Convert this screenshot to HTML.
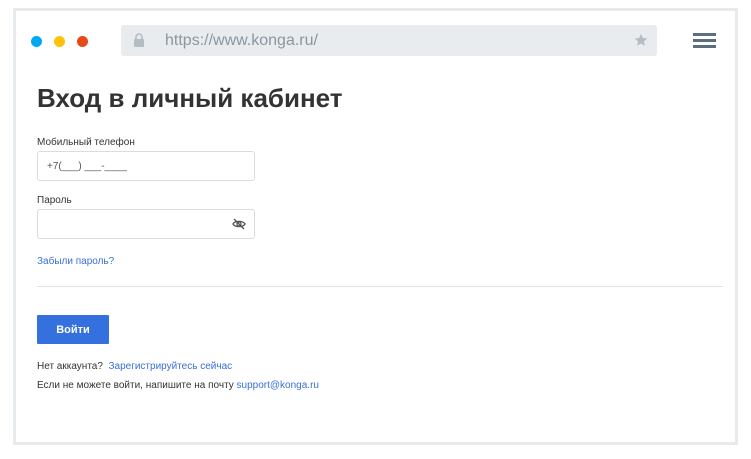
<!DOCTYPE html><html><head><meta charset="utf-8"><style>
body{margin:0;width:751px;height:459px;background:#fff;font-family:"Liberation Sans","DejaVu Sans",sans-serif;position:relative;overflow:hidden}
.frame{position:absolute;left:13px;top:8px;width:719px;height:431px;border:3px solid #e8ebee;background:#fff}
.a{position:absolute}
.dot{position:absolute;top:36px;width:11px;height:11px;border-radius:50%}
.url{left:121px;top:25px;width:536px;height:31px;background:#e9ecef;border-radius:3px}
.inp{position:absolute;left:37px;width:216px;height:28px;border:1px solid #d9dce0;border-radius:3px;background:#fff}
.lbl{font-size:10px;color:#333}
.lnk{color:#3a6fd8}
</style></head><body>
<div class="frame"></div>
<div class="dot" style="left:31px;background:#00a8f3"></div>
<div class="dot" style="left:54px;background:#ffc20a"></div>
<div class="dot" style="left:77px;background:#e64a19"></div>
<div class="a url"></div>
<svg class="a" style="left:133px;top:33px" width="12" height="14" viewBox="0 0 12 14"><path d="M3 6V4a3 3 0 0 1 6 0v2" stroke="#b4bcc4" stroke-width="1.6" fill="none"/><rect x="1" y="6" width="10" height="8" rx="1" fill="#b4bcc4"/></svg>
<div class="a" style="left:165px;top:32px;font-size:16px;color:#8a96a0">https://www.konga.ru/</div>
<svg class="a" style="left:634px;top:33px" width="14" height="14" viewBox="0 0 24 24"><path d="M12 1.5l3.2 7 7.6.8-5.7 5.1 1.6 7.5L12 18l-6.7 3.9 1.6-7.5L1.2 9.3l7.6-.8z" fill="#b4bcc4"/></svg>
<div class="a" style="left:693px;top:33px;width:23px;height:3px;background:#5b6f7f;box-shadow:0 6px 0 #5b6f7f,0 12px 0 #5b6f7f"></div>
<div class="a" style="left:37px;top:83px;font-size:26px;font-weight:bold;color:#333">Вход в личный кабинет</div>
<div class="a lbl" style="left:37px;top:137px">Мобильный телефон</div>
<div class="inp" style="top:151px"></div>
<div class="a" style="left:47px;top:161px;font-size:10px;color:#555">+7(___) ___-____</div>
<div class="a lbl" style="left:37px;top:195px">Пароль</div>
<div class="inp" style="top:209px"></div>
<svg class="a" style="left:232px;top:218px" width="14" height="12" viewBox="0 0 14 12"><path d="M1 6C3 2.5 11 2.5 13 6C11 9.5 3 9.5 1 6Z" stroke="#555" stroke-width="1.3" fill="none"/><circle cx="7" cy="6" r="2" stroke="#555" stroke-width="1.3" fill="none"/><path d="M2 1L12 11" stroke="#555" stroke-width="1.3"/></svg>
<div class="a lnk" style="left:37px;top:256px;font-size:10px">Забыли пароль?</div>
<div class="a" style="left:37px;top:286px;width:686px;height:1px;background:#e2e4e7"></div>
<div class="a" style="left:37px;top:315px;width:72px;height:29px;background:#3471de;color:#fff;font-size:11px;font-weight:bold;text-align:center;line-height:30px;border-radius:1px">Войти</div>
<div class="a" style="left:37px;top:361px;font-size:10px;color:#333">Нет аккаунта? &nbsp;<span class="lnk">Зарегистрируйтесь сейчас</span></div>
<div class="a" style="left:37px;top:380px;font-size:10px;color:#333">Если не можете войти, напишите на почту <span class="lnk">support@konga.ru</span></div>
</body></html>
